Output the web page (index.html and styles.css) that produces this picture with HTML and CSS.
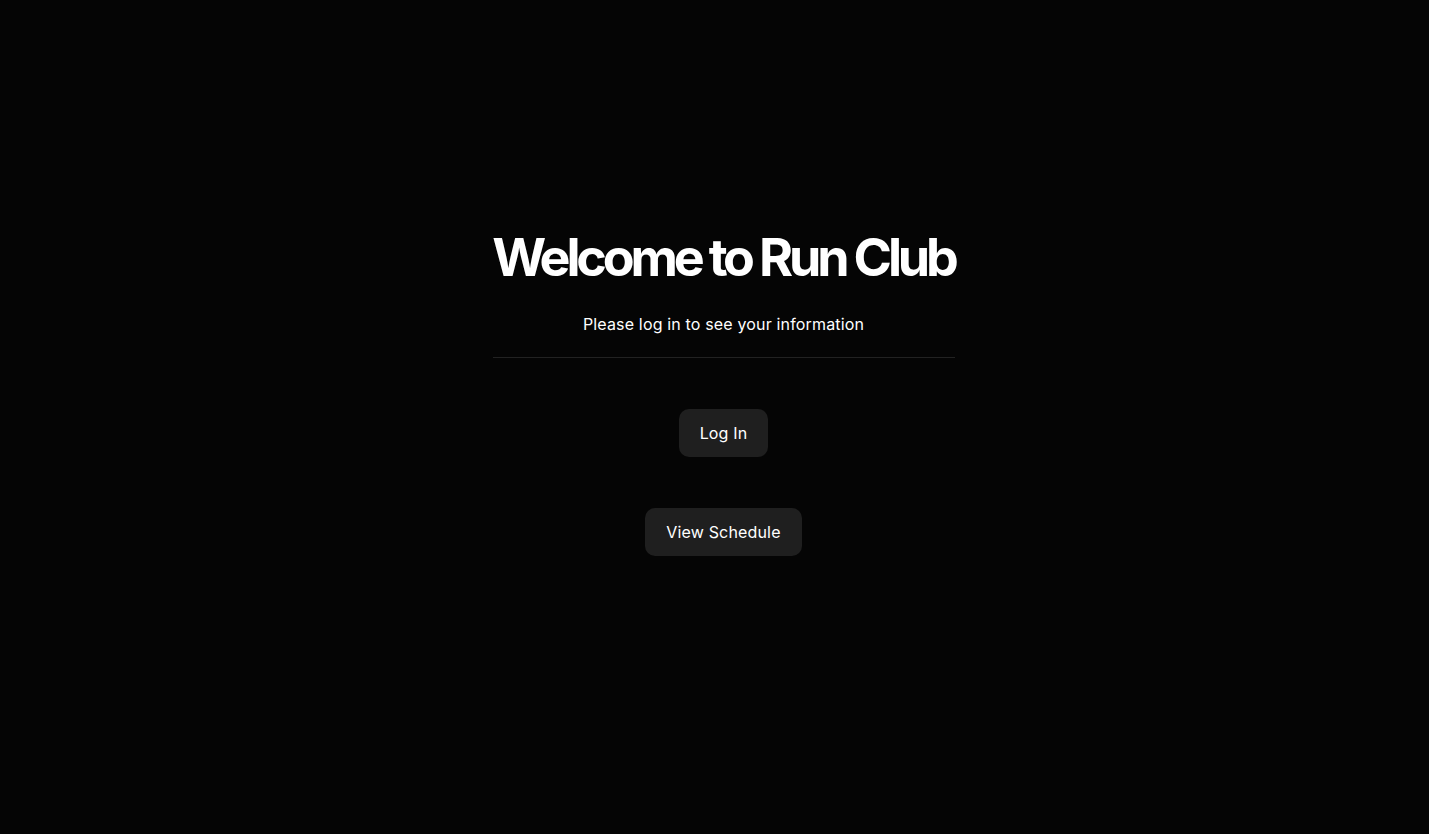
FILE: index.html
```html
<!DOCTYPE html>
<html>
<head>
<meta charset="utf-8">
<link rel="stylesheet" href="styles.css">
</head>
<body>
<main class="page">
  <section class="hero">
    <h1 class="title">Welcome to Run Club</h1>
    <p class="subtitle">Please log in to see your information</p>
    <hr class="divider">
    <div class="actions">
      <button class="btn">Log In</button>
      <button class="btn">View Schedule</button>
    </div>
  </section>
</main>
</body>
</html>
```

FILE: styles.css
```css
* { box-sizing: border-box; }
html, body { margin: 0; padding: 0; }
body {
  background: #050505;
  color: #fff;
  font-family: Inter, "Noto Sans", sans-serif;
  min-height: 834px;
}
.page {
  display: flex;
  justify-content: center;
  padding-top: 224px;
  padding-left: 18px;
}
.hero {
  width: 462px;
  display: flex;
  flex-direction: column;
  align-items: center;
}
.title {
  margin: 0;
  font-size: 52px;
  font-weight: 700;
  letter-spacing: -0.08em;
  line-height: 68px;
  white-space: nowrap;
}
.subtitle {
  margin: 20px 0 0;
  font-size: 16px;
  line-height: 24px;
  letter-spacing: 0.01em;
}
.divider {
  width: 100%;
  margin: 21px 0 0;
  border: 0;
  border-top: 1px solid #222;
  height: 0;
}
.actions {
  margin-top: 51px;
  display: flex;
  flex-direction: column;
  align-items: center;
  gap: 51px;
}
.btn {
  background: #1f1f1f;
  color: #fff;
  border: 0;
  border-radius: 10px;
  height: 48px;
  padding: 0 21px;
  font-family: Inter, "Noto Sans", sans-serif;
  font-size: 16px;
  font-weight: 400;
  letter-spacing: 0.01em;
}
```
